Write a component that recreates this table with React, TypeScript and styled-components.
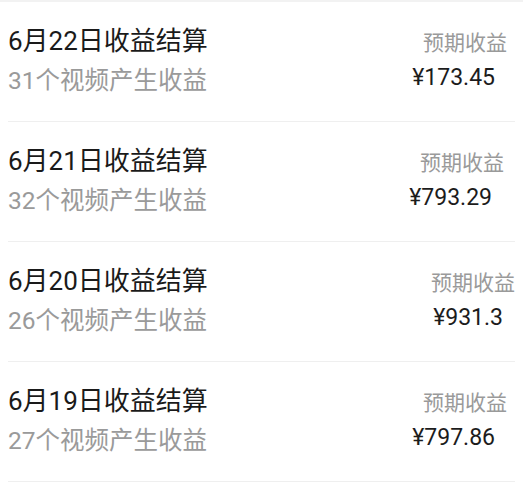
import React from 'react'
import styled, { createGlobalStyle } from 'styled-components'

interface Settlement {
	date: string
	videos: number
	amount: string
	shift: number
}

const settlements: Settlement[] = [
	{ date: '6月22日', videos: 31, amount: '173.45', shift: 0 },
	{ date: '6月21日', videos: 32, amount: '793.29', shift: -3 },
	{ date: '6月20日', videos: 26, amount: '931.3', shift: 8 },
	{ date: '6月19日', videos: 27, amount: '797.86', shift: 0 }
]

const App: React.FC = () => {
	return (
		<>
			<GlobalStyle />
			<List>
				{settlements.map((item) => (
					<Row key={item.date}>
						<Info>
							<Title>{item.date}收益结算</Title>
							<Sub>{item.videos}个视频产生收益</Sub>
						</Info>
						<Earnings $shift={item.shift}>
							<Label>预期收益</Label>
							<Amount>¥{item.amount}</Amount>
						</Earnings>
					</Row>
				))}
			</List>
		</>
	)
}

export default App

const GlobalStyle = createGlobalStyle`
	html, body {
		margin: 0;
		padding: 0;
		background: #fff;
	}
	body {
		font-family: Roboto, "Noto Sans CJK SC", sans-serif;
	}
`

const List = styled.div`
	width: 523px;
	border-top: 2px solid #f2f2f2;
	display: flex;
	flex-direction: column;
`

const Row = styled.div`
	height: 119px;
	margin: 0 8px;
	display: flex;
	justify-content: space-between;
	align-items: flex-start;
	border-bottom: 1px solid #efefef;
`

const Info = styled.div`
	padding-top: 19px;
	display: flex;
	flex-direction: column;
`

const Title = styled.div`
	font-size: 26px;
	line-height: 40px;
	color: #1a1a1a;
`

const Sub = styled.div`
	font-size: 24.5px;
	line-height: 40px;
	color: #9a9a9a;
`

const Earnings = styled.div<{ $shift: number }>`
	padding-top: 23px;
	margin-right: ${({ $shift }) => 8 - $shift}px;
	display: flex;
	flex-direction: column;
	align-items: flex-end;
`

const Label = styled.div`
	font-size: 21px;
	line-height: 36px;
	color: #9a9a9a;
`

const Amount = styled.div`
	margin-right: 12px;
	font-size: 23px;
	line-height: 34px;
	color: #1c1c1c;
`
